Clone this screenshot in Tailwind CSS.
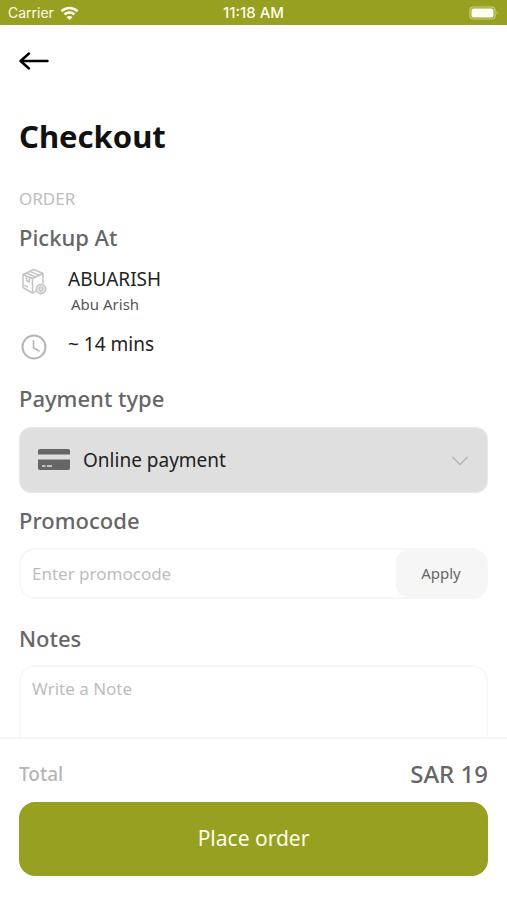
<!DOCTYPE html>
<html lang="en">
<head>
  <meta charset="UTF-8" />
  <meta name="viewport" content="width=device-width, initial-scale=1.0" />
  <title>Checkout</title>
  <script src="https://cdn.jsdelivr.net/npm/@tailwindcss/browser@4"></script>
</head>
<body class="bg-white h-screen flex flex-col overflow-hidden font-['Noto_Sans',sans-serif] text-[#222]">

  <!-- Status bar -->
  <div class="bg-[#97a020] text-[#fdfdea] h-[25px] shrink-0 grid grid-cols-3 items-center px-2 pt-px text-sm font-['Inter',sans-serif]">
    <div class="flex items-center gap-1.5">
      <span>Carrier</span>
      <svg class="w-[19px] h-[14px]" viewBox="0 0 18 14" fill="none" stroke="currentColor" stroke-width="2.6">
        <path d="M1 5.200a11.500 11.500 0 0 1 16 0" />
        <path d="M4 8.500a7.200 7.200 0 0 1 10 0" />
        <path d="M9 14 6 11.200a4.200 4.200 0 0 1 6 0z" fill="currentColor" stroke="none" />
      </svg>
    </div>
    <span class="text-center text-[15px] font-medium">11:18 AM</span>
    <svg class="w-[30px] h-[14px] justify-self-end" viewBox="0 0 30 14" fill="none">
      <rect x="1" y="1" width="25" height="12" rx="3.500" stroke="#c9cf83" stroke-width="1.200" />
      <rect x="2.500" y="2.500" width="22" height="9" rx="2" fill="#fffff2" />
      <path d="M27.600 4.800q2 2.200 0 4.400z" fill="#c9cf83" />
    </svg>
  </div>

  <main class="flex-1 min-h-0 overflow-hidden px-[19px] pt-4">
    <button type="button" aria-label="Back" class="flex items-center w-10 h-10">
      <svg class="w-[30px] h-[20px]" viewBox="0 0 30 20" fill="none" stroke="#000" stroke-width="2.400" stroke-linecap="round" stroke-linejoin="round">
        <path d="M28.500 10H1.500M10 2.500 1.500 10l8.500 7.500" />
      </svg>
    </button>

    <h1 class="mt-[35px] text-[31px] leading-10 font-bold text-[#111]">Checkout</h1>

    <p class="mt-[31px] text-[17px] leading-6 text-[#bdbdbd]">ORDER</p>

    <h2 class="mt-[10px] text-[22px] leading-8 font-medium text-[#666]">Pickup At</h2>
    <div class="mt-3 flex gap-5">
      <svg class="w-[29px] h-7 mt-[3px] shrink-0" viewBox="0 0 28 28" fill="none" stroke="#c4c4c4" stroke-width="1.500" stroke-linejoin="round" stroke-linecap="round">
        <path d="M3.500 6.500 14.500 1.500l9 4v9.500M3.500 6.500v13l9.500 5.500V10.500zM13 10.500l10.500-5M13 25l3.500-1.800" />
        <path d="M6.800 5l9.500 4M10.300 3.400l9.700 4M7 8.200v4.300l2.800 1.500V9.400" />
        <path d="M5.500 17.500l2.500 1.400" />
        <circle cx="21.500" cy="21" r="4.700" fill="#e4e4e4" />
        <path d="M21.500 23.800c-3-3-1.800-4.800 0-4.800s3 1.800 0 4.800z" stroke-width="1.100" />
      </svg>
      <div>
        <p class="text-[19px] leading-7">ABUARISH</p>
        <p class="mt-px pl-[3px] text-[15px] leading-5 text-[#555]">Abu Arish</p>
      </div>
    </div>
    <div class="mt-4 flex gap-5">
      <svg class="w-[29px] h-7 mt-[3px] shrink-0" viewBox="0 0 28 28" fill="none" stroke="#b5b5b5" stroke-width="2">
        <circle cx="14.500" cy="14" r="11.500" />
        <path d="M14 7.500v7.200l5.500 3.300" stroke-width="1.600" stroke-linecap="round" />
      </svg>
      <p class="text-[19px] leading-7">~ 14 mins</p>
    </div>

    <h2 class="mt-[21px] text-[22px] leading-8 font-medium text-[#666]"><label for="payment">Payment type</label></h2>
    <div class="relative mt-[13px]">
      <select id="payment" class="appearance-none w-full h-[66px] rounded-xl border border-[#e8e8e8] bg-[#dfdfdf] pl-[63px] pr-12 text-[19px] text-[#222]">
        <option>Online payment</option>
        <option>Cash</option>
      </select>
      <svg class="absolute left-[19px] top-[22px] w-8 h-[22px] pointer-events-none" viewBox="0 0 32 22">
        <path d="M2 0h28q2 0 2 2v3.500H0V2q0-2 2-2zM0 10.500h32V19q0 2-2 2H2q-2 0-2-2z" fill="#666" />
        <path d="M4 17h3.500M9 17h5" stroke="#dfdfdf" stroke-width="1.600" />
      </svg>
      <svg class="absolute right-5 top-[29px] w-4 h-[10px] pointer-events-none" viewBox="0 0 16 10" fill="none" stroke="#b3b3b3" stroke-width="1.300">
        <path d="M.5 1 8 8.500 15.500 1" />
      </svg>
    </div>

    <h2 class="mt-[11px] text-[22px] leading-8 font-medium text-[#666]"><label for="promo">Promocode</label></h2>
    <div class="mt-3 flex h-[51px] rounded-2xl border-2 border-[#f7f7f7]">
      <input id="promo" type="text" placeholder="Enter promocode" class="flex-1 min-w-0 pl-[11px] text-[17px] outline-none placeholder:text-[#bdbdbd]" />
      <button type="button" class="w-[90px] rounded-xl bg-[#f6f6f6] text-[15px] text-[#666]">Apply</button>
    </div>

    <h2 class="mt-[23px] text-[22px] leading-8 font-medium text-[#666]"><label for="notes">Notes</label></h2>
    <textarea id="notes" placeholder="Write a Note" class="block mt-[11px] w-full h-32 resize-none rounded-2xl border-2 border-[#f7f7f7] px-[11px] py-[10px] text-[17px] leading-6 outline-none placeholder:text-[#bdbdbd]"></textarea>
  </main>

  <footer class="relative shrink-0 bg-white border-t-2 border-[#f7f7f7] px-[19px] pt-[19px] pb-6">
    <div class="flex items-center justify-between leading-8">
      <span class="text-[19px] font-medium text-[#b5b5b5]">Total</span>
      <span class="text-2xl leading-8 font-medium text-[#666]">SAR 19</span>
    </div>
    <button type="button" class="mt-3 w-full h-[74px] rounded-2xl bg-[#97a020] text-[21px] text-[#fdfdea]">Place order</button>
  </footer>

</body>
</html>
